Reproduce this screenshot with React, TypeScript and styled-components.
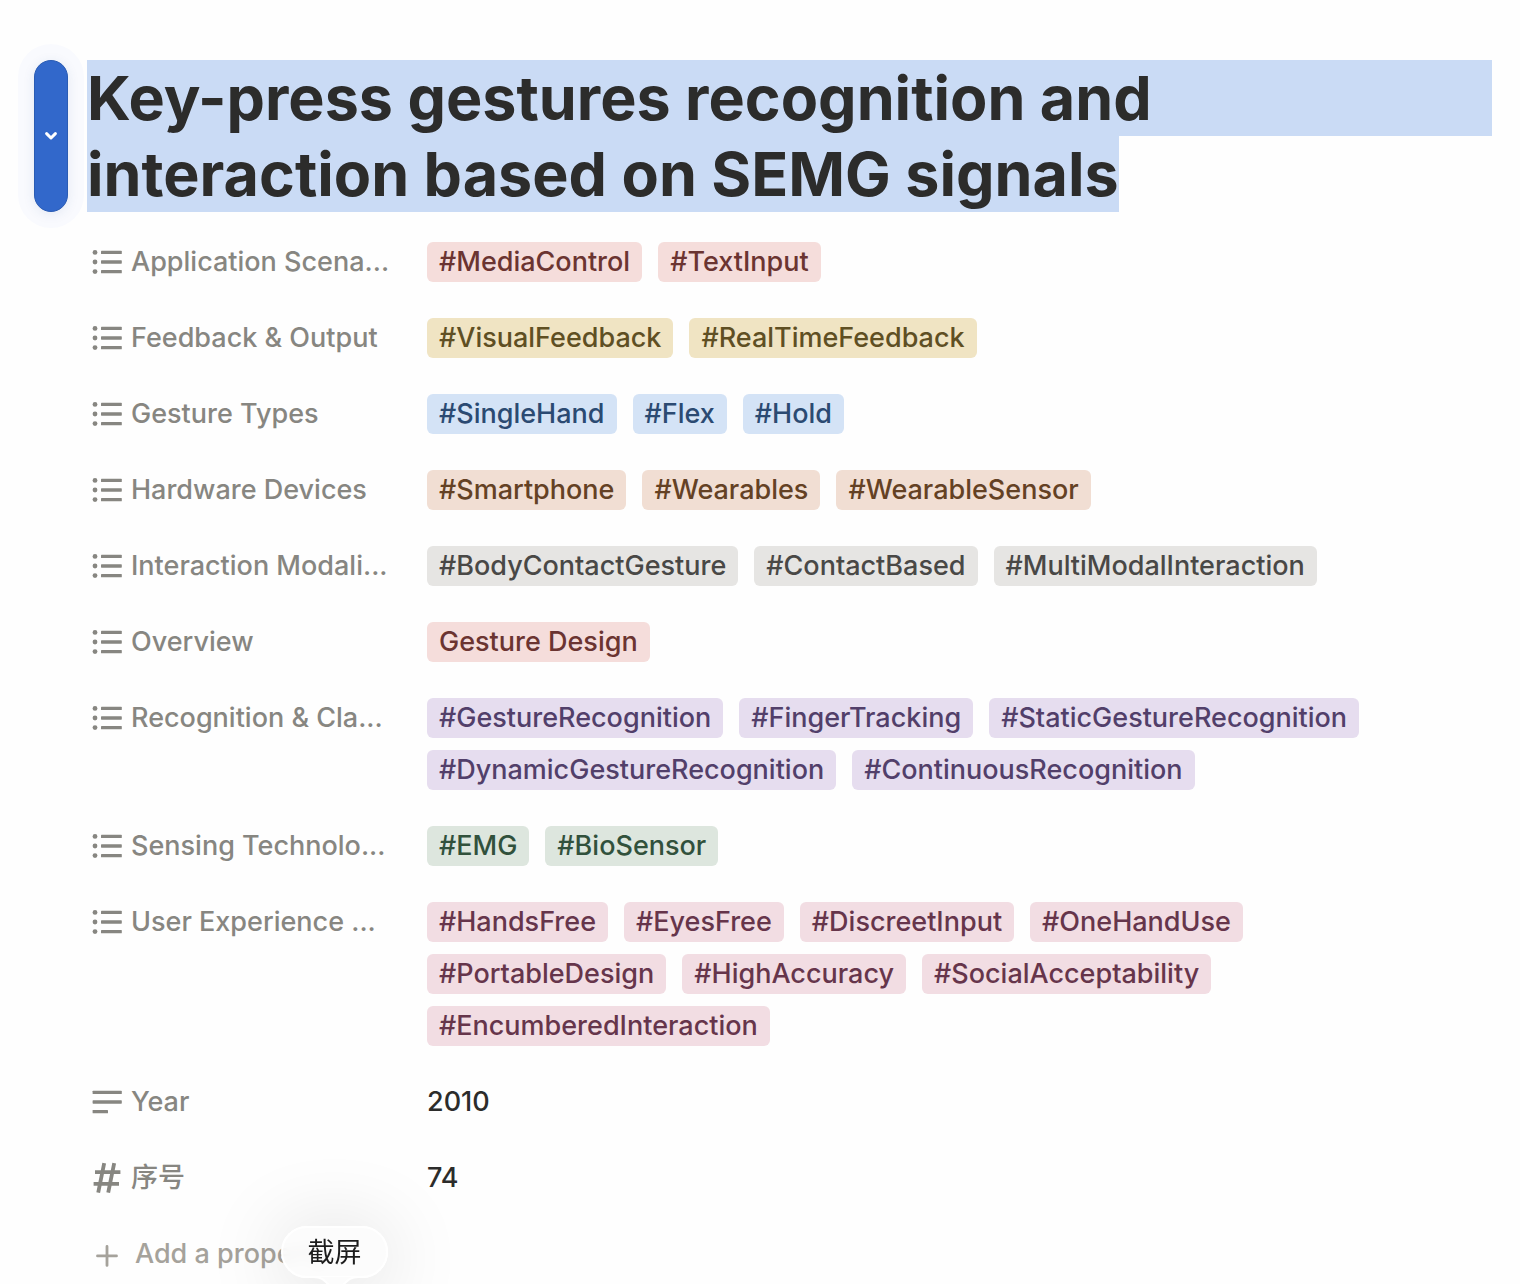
import React from "react";
import styled, { createGlobalStyle } from "styled-components";

const GlobalStyle = createGlobalStyle`
  * { box-sizing: border-box; }
  body {
    margin: 0;
    background: #fefefe;
    color: #2c2c2b;
    font-family: Inter, "Noto Sans CJK SC", sans-serif;
    font-size: 27px;
    font-weight: 500;
    line-height: 40px;
  }
`;

const tones = {
  red: { background: "#f5dddb", color: "#6b3431" },
  yellow: { background: "#f0e4c3", color: "#5f4f23" },
  blue: { background: "#d4e3f6", color: "#2b4a72" },
  orange: { background: "#f1ded3", color: "#644124" },
  gray: { background: "#e6e5e3", color: "#494846" },
  purple: { background: "#e6ddef", color: "#523f6a" },
  green: { background: "#dde6de", color: "#31513c" },
  pink: { background: "#f2dde3", color: "#66354b" },
};
type Tone = keyof typeof tones;

const Page = styled.main`
  position: relative;
  min-height: 100vh;
  padding: 60px 28px 0 34px;
  overflow: hidden;
`;

const Header = styled.header`
  display: flex;
  gap: 19px;
`;

const Handle = styled.button`
  display: flex;
  align-items: center;
  justify-content: center;
  flex: none;
  width: 34px;
  padding: 0;
  border: 1px solid #2a5cb4;
  border-radius: 17px;
  background: #3268cb;
  color: #fff;
  box-shadow: 0 2px 12px rgba(40, 80, 150, 0.1), 0 0 0 16px #f9fafe;
`;

const Title = styled.h1`
  flex: 1;
  margin: 0;
  font-size: 61px;
  font-weight: 700;
  line-height: 76px;
`;

const FullLine = styled.span`
  display: block;
  background: #cadbf5;
`;

const LastLine = styled.span`
  display: inline-block;
  vertical-align: top;
  background: #cadbf5;
`;

const Properties = styled.dl`
  display: flex;
  flex-direction: column;
  gap: 36px;
  margin: 0;
  padding: 30px 0 0 58px;
`;

const Row = styled.div`
  display: grid;
  grid-template-columns: 315px 1fr;
  gap: 20px;
`;

const Label = styled.dt`
  display: flex;
  align-items: flex-start;
  gap: 8px;
  min-width: 0;
  color: #878681;
`;

const LabelText = styled.span`
  white-space: nowrap;
`;

const Value = styled.dd`
  display: flex;
  flex-wrap: wrap;
  gap: 12px 16px;
  margin: 0;
`;

const Tag = styled.span<{ $tone: Tone }>`
  padding: 0 12px;
  border-radius: 6px;
  background: ${(p) => tones[p.$tone].background};
  color: ${(p) => tones[p.$tone].color};
`;

const Glyph = styled.svg`
  flex: none;
  width: 31px;
  height: 40px;
`;

const AddButton = styled.button`
  display: flex;
  gap: 12px;
  margin: 36px 0 0 58px;
  padding: 0;
  border: 0;
  background: none;
  color: #a5a29b;
  font: inherit;
`;

const Bubble = styled.div`
  position: absolute;
  left: 281px;
  bottom: 6px;
  width: 107px;
  height: 52px;
  border: 2px solid #fff;
  border-radius: 26px;
  background: rgba(252, 252, 252, 0.9);
  backdrop-filter: blur(6px);
  box-shadow: 0 6px 80px 4px rgba(0, 0, 0, 0.13);
  color: #1c1c1c;
  font-weight: 400;
  line-height: 50px;
  text-align: center;
`;

const Tail = styled.svg`
  position: absolute;
  left: 31px;
  top: 48px;
  width: 44px;
  height: 10px;
`;

const ListIcon = () => (
  <Glyph viewBox="0 0 31 40" fill="currentColor" aria-hidden="true">
    {[10.4, 20, 29.6].map((y) => (
      <React.Fragment key={y}>
        <circle cx="3" cy={y} r="2.4" />
        <rect x="9" y={y - 1.7} width="20.8" height="3.4" rx="0.6" />
      </React.Fragment>
    ))}
  </Glyph>
);

const TextIcon = () => (
  <Glyph viewBox="0 0 31 40" fill="currentColor" aria-hidden="true">
    <rect x="0.6" y="8.7" width="29.2" height="3.4" rx="0.6" />
    <rect x="0.6" y="18.3" width="29.2" height="3.4" rx="0.6" />
    <rect x="0.6" y="27.9" width="15.4" height="3.4" rx="0.6" />
  </Glyph>
);

const NumberIcon = () => (
  <Glyph viewBox="0 0 31 40" fill="none" stroke="currentColor" strokeWidth="3.8" aria-hidden="true">
    <path d="M12.2 5.2 6.2 34.6M22.2 5.2 16.2 34.6M3 14.2H28.4M1.6 25.8H27" />
  </Glyph>
);

const PlusIcon = () => (
  <Glyph viewBox="0 0 31 40" fill="none" stroke="currentColor" strokeWidth="2.8" strokeLinecap="round" aria-hidden="true">
    <path d="M15 12.4V31.4M5.5 21.9H24.5" />
  </Glyph>
);

const properties: { label: string; tone: Tone; tags: string[] }[] = [
  { label: "Application Scena...", tone: "red", tags: ["#MediaControl", "#TextInput"] },
  { label: "Feedback & Output", tone: "yellow", tags: ["#VisualFeedback", "#RealTimeFeedback"] },
  { label: "Gesture Types", tone: "blue", tags: ["#SingleHand", "#Flex", "#Hold"] },
  { label: "Hardware Devices", tone: "orange", tags: ["#Smartphone", "#Wearables", "#WearableSensor"] },
  { label: "Interaction Modali...", tone: "gray", tags: ["#BodyContactGesture", "#ContactBased", "#MultiModalInteraction"] },
  { label: "Overview", tone: "red", tags: ["Gesture Design"] },
  {
    label: "Recognition & Cla...",
    tone: "purple",
    tags: ["#GestureRecognition", "#FingerTracking", "#StaticGestureRecognition", "#DynamicGestureRecognition", "#ContinuousRecognition"],
  },
  { label: "Sensing Technolo...", tone: "green", tags: ["#EMG", "#BioSensor"] },
  {
    label: "User Experience ...",
    tone: "pink",
    tags: ["#HandsFree", "#EyesFree", "#DiscreetInput", "#OneHandUse", "#PortableDesign", "#HighAccuracy", "#SocialAcceptability", "#EncumberedInteraction"],
  },
];

export default function App() {
  return (
    <Page>
      <GlobalStyle />
      <Header>
        <Handle type="button" aria-label="Block menu">
          <svg width="14" height="10" viewBox="0 0 14 10" fill="none" stroke="currentColor" strokeWidth="3" strokeLinecap="round" strokeLinejoin="round" aria-hidden="true">
            <path d="M2.6 2.6 7 7 11.4 2.6" />
          </svg>
        </Handle>
        <Title>
          <FullLine>Key-press gestures recognition and </FullLine>
          <LastLine>interaction based on SEMG signals</LastLine>
        </Title>
      </Header>
      <Properties>
        {properties.map((p) => (
          <Row key={p.label}>
            <Label>
              <ListIcon />
              <LabelText>{p.label}</LabelText>
            </Label>
            <Value>
              {p.tags.map((t) => (
                <Tag key={t} $tone={p.tone}>{t}</Tag>
              ))}
            </Value>
          </Row>
        ))}
        <Row>
          <Label>
            <TextIcon />
            <LabelText>Year</LabelText>
          </Label>
          <Value>2010</Value>
        </Row>
        <Row>
          <Label>
            <NumberIcon />
            <LabelText>序号</LabelText>
          </Label>
          <Value>74</Value>
        </Row>
      </Properties>
      <AddButton type="button">
        <PlusIcon />
        Add a property
      </AddButton>
      <Bubble role="tooltip">
        截屏
        <Tail viewBox="0 0 44 10" fill="#fcfcfc" stroke="#fff" strokeWidth="2" aria-hidden="true">
          <path d="M0 1C8 1 10 4 16 10H28C34 4 36 1 44 1" />
        </Tail>
      </Bubble>
    </Page>
  );
}
